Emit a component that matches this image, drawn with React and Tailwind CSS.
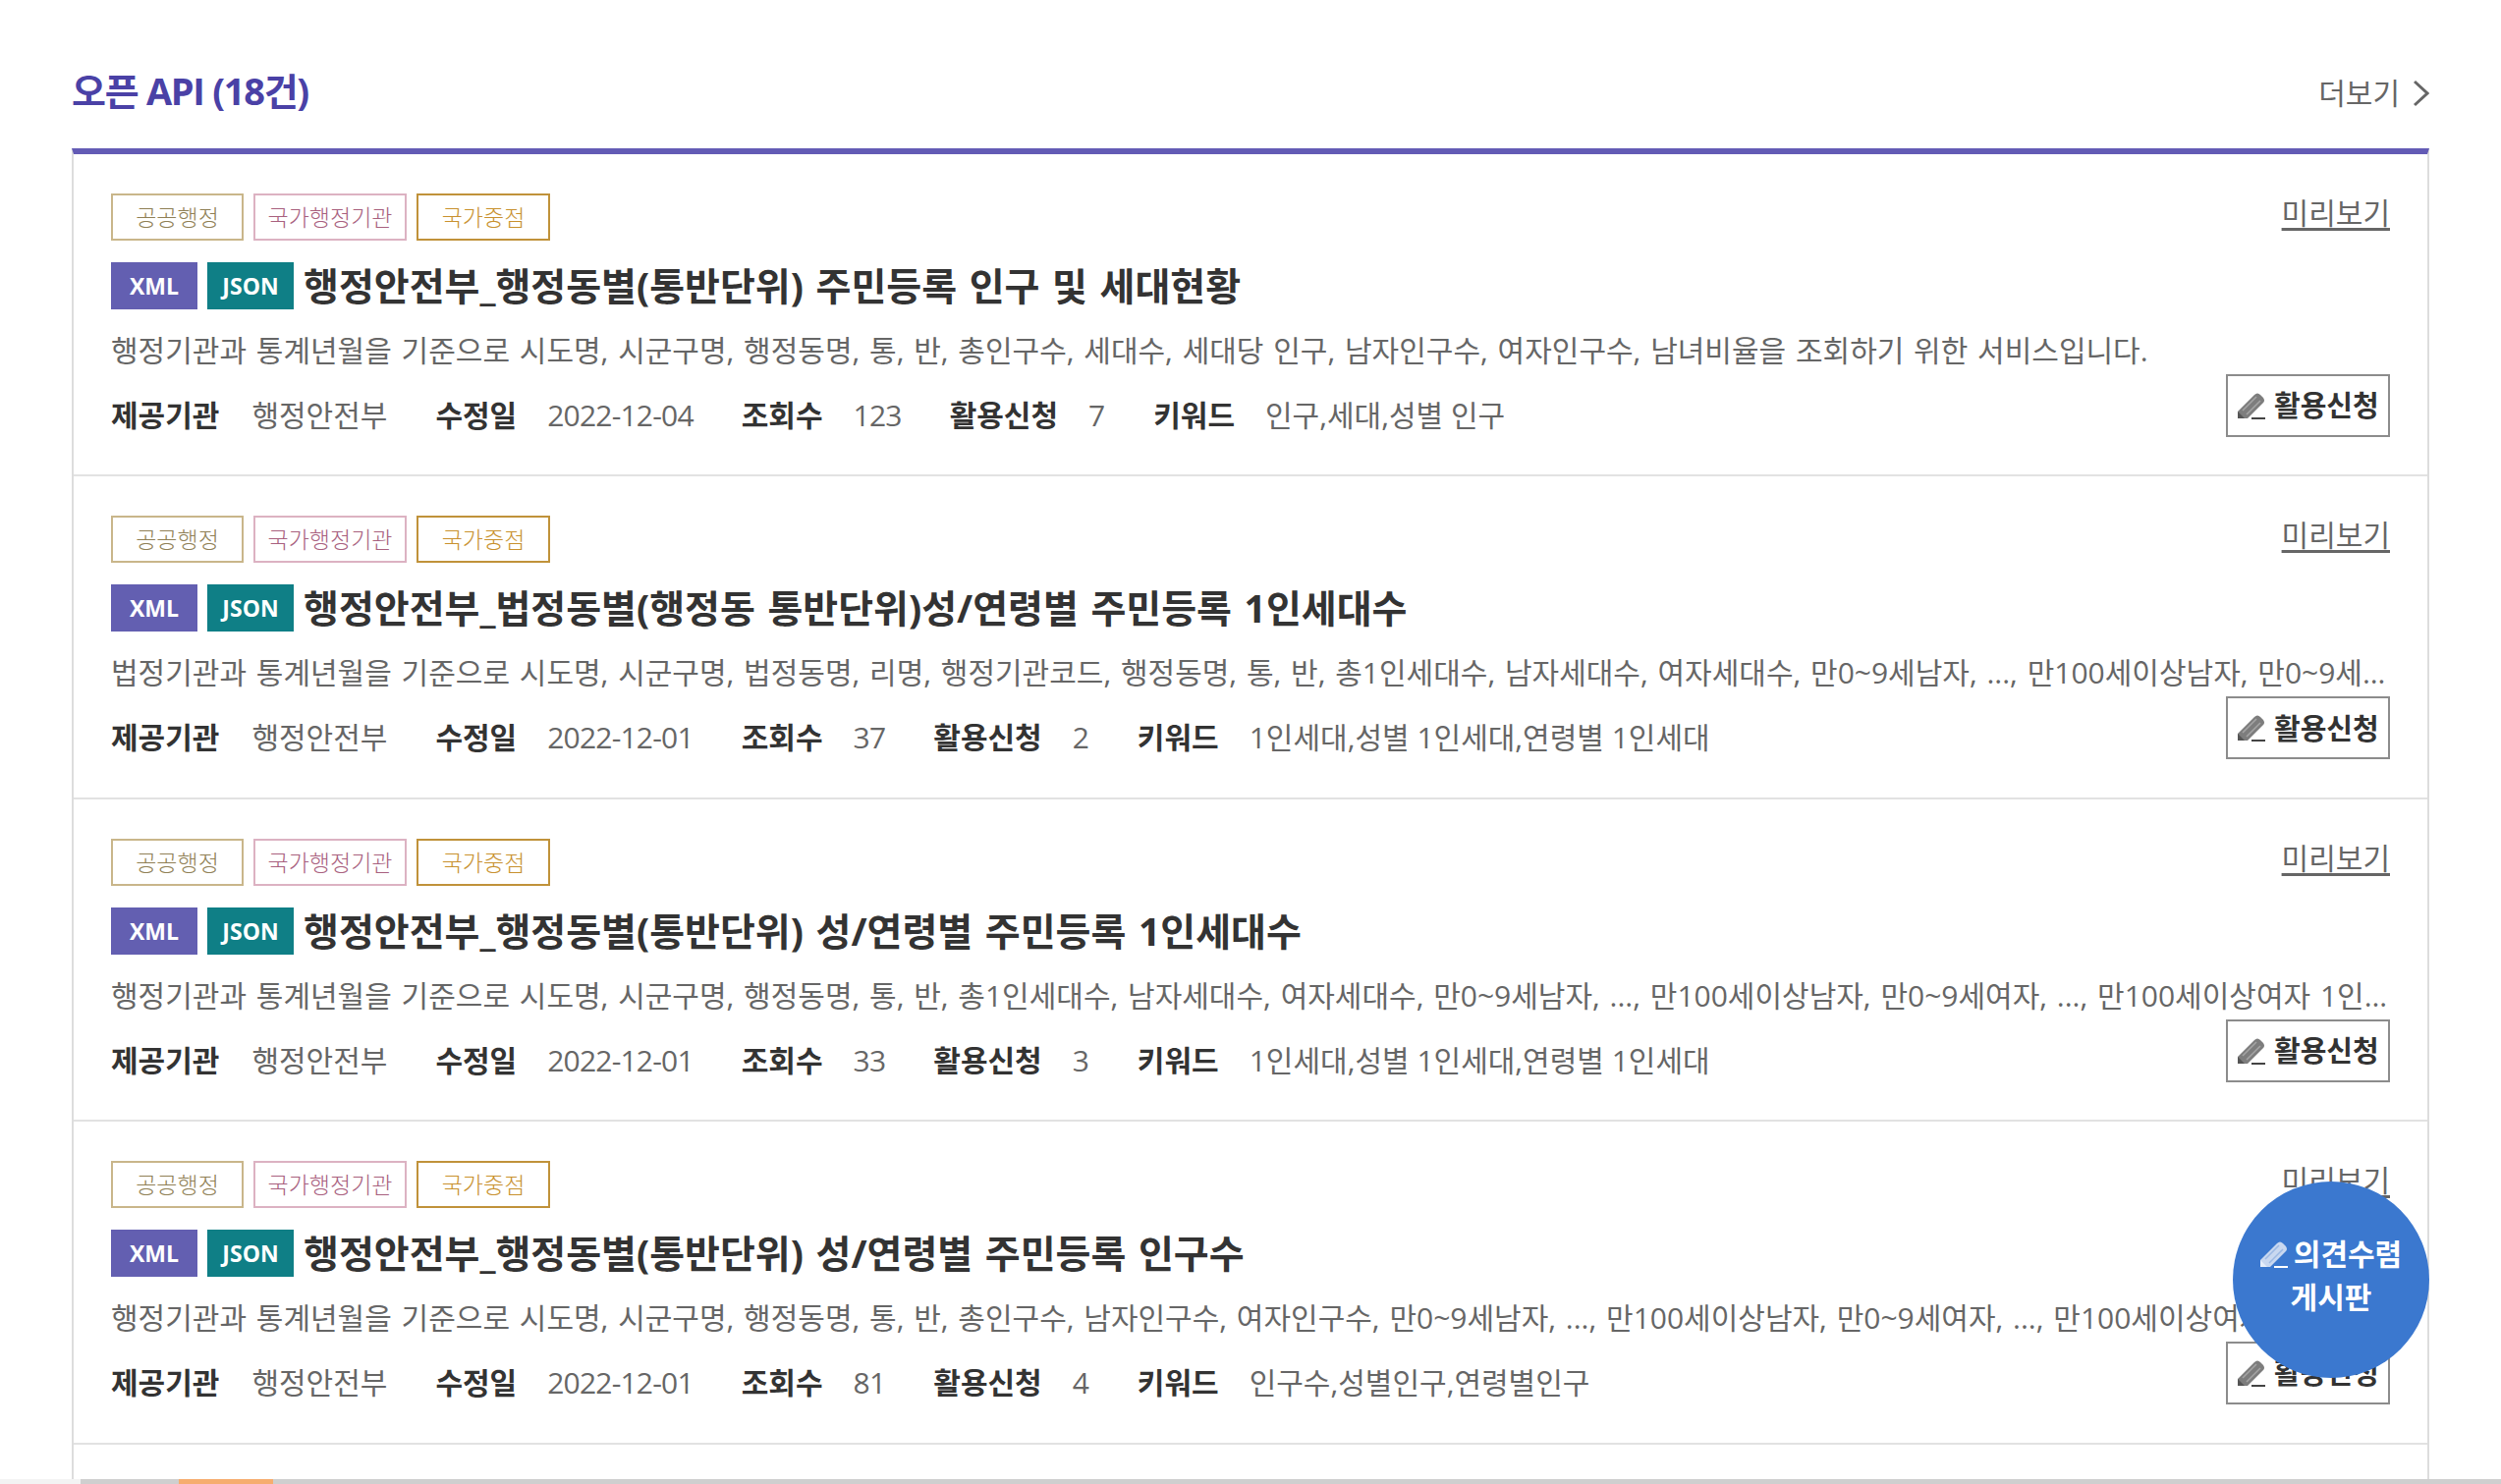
const rows = [
  {
    title: "행정안전부_행정동별(통반단위) 주민등록 인구 및 세대현황",
    desc: "행정기관과 통계년월을 기준으로 시도명, 시군구명, 행정동명, 통, 반, 총인구수, 세대수, 세대당 인구, 남자인구수, 여자인구수, 남녀비율을 조회하기 위한 서비스입니다.",
    date: "2022-12-04",
    views: "123",
    apply: "7",
    keywords: "인구,세대,성별 인구",
  },
  {
    title: "행정안전부_법정동별(행정동 통반단위)성/연령별 주민등록 1인세대수",
    desc: "법정기관과 통계년월을 기준으로 시도명, 시군구명, 법정동명, 리명, 행정기관코드, 행정동명, 통, 반, 총1인세대수, 남자세대수, 여자세대수, 만0~9세남자, ..., 만100세이상남자, 만0~9세여자, ..., 만100세이상여자 1인세대수를 조회하기 위한 서비스입니다.",
    date: "2022-12-01",
    views: "37",
    apply: "2",
    keywords: "1인세대,성별 1인세대,연령별 1인세대",
  },
  {
    title: "행정안전부_행정동별(통반단위) 성/연령별 주민등록 1인세대수",
    desc: "행정기관과 통계년월을 기준으로 시도명, 시군구명, 행정동명, 통, 반, 총1인세대수, 남자세대수, 여자세대수, 만0~9세남자, ..., 만100세이상남자, 만0~9세여자, ..., 만100세이상여자 1인세대수를 조회하기 위한 서비스입니다.",
    date: "2022-12-01",
    views: "33",
    apply: "3",
    keywords: "1인세대,성별 1인세대,연령별 1인세대",
  },
  {
    title: "행정안전부_행정동별(통반단위) 성/연령별 주민등록 인구수",
    desc: "행정기관과 통계년월을 기준으로 시도명, 시군구명, 행정동명, 통, 반, 총인구수, 남자인구수, 여자인구수, 만0~9세남자, ..., 만100세이상남자, 만0~9세여자, ..., 만100세이상여자 인구수를 조회하기 위한 서비스입니다.",
    date: "2022-12-01",
    views: "81",
    apply: "4",
    keywords: "인구수,성별인구,연령별인구",
  },
];

function PencilIcon({ body, line, stripe, tip }) {
  return (
    <svg width="28" height="28" viewBox="0 0 28 28" className="shrink-0">
      <path d="M0 27 L0 20 L17 3 Q20 0 23 3 L26 6 Q28 9 26 11 L10 27 Z" fill={body} />
      <path d="M0 27 L0 20 L7 27 Z" fill={tip} />
      <path d="M5 19 L19 5 M9 23 L23 9" stroke={stripe} strokeWidth="1.5" fill="none" />
      <path d="M14 26 H28 V28 H14 Z" fill={line} />
    </svg>
  );
}

function Meta({ label, value, numeric, wide }) {
  return (
    <div className={wide ? "flex items-center gap-[33px]" : "flex items-center gap-[31px]"}>
      <span className="font-bold text-[#333]">{label}</span>
      <span className={numeric ? "tracking-[-0.8px] text-[#666]" : "text-[#666]"}>{value}</span>
    </div>
  );
}

function ApiRow({ row }) {
  return (
    <li className="h-[328.4px] border-b-2 border-[#e2e2e2] px-[38px] pt-[40px]">
      <div className="flex items-start justify-between">
        <div className="flex gap-[10px] text-[23px] leading-[44px] font-light">
          <span className="h-[48px] w-[135px] border-2 border-[#c9b68a] text-center text-[#8f7f55]">공공행정</span>
          <span className="h-[48px] w-[156px] border-2 border-[#dcb2c2] text-center text-[#a8607e]">국가행정기관</span>
          <span className="h-[48px] w-[136px] border-2 border-[#c0923a] text-center text-[#c8912f]">국가중점</span>
        </div>
        <a className="text-[30px] leading-[40px] text-[#666] underline underline-offset-[4px]">미리보기</a>
      </div>
      <div className="mt-[22px] flex items-center">
        <span className="flex h-[48px] w-[88px] items-center justify-center bg-[#635fb1] text-[23px] font-bold text-white">XML</span>
        <span className="ml-[10px] flex h-[48px] w-[88px] items-center justify-center bg-[#0f7f86] text-[23px] font-bold text-white">JSON</span>
        <h3 className="ml-[10px] text-[39px] leading-[48px] font-bold text-[#333] [word-spacing:2.5px]">{row.title}</h3>
      </div>
      <p className="mt-[22px] truncate text-[30px] leading-[40px] text-[#666] [word-spacing:2px]">{row.desc}</p>
      <div className="mt-[4px] flex items-start justify-between">
        <div className="mt-[22px] flex gap-[49px] text-[30px] leading-[40px]">
          <Meta label="제공기관" value="행정안전부" wide />
          <Meta label="수정일" value={row.date} numeric />
          <Meta label="조회수" value={row.views} numeric />
          <Meta label="활용신청" value={row.apply} />
          <Meta label="키워드" value={row.keywords} />
        </div>
        <button className="flex h-[64px] w-[167px] items-center gap-[9px] border-2 border-[#8c8c8c] pl-[10px] text-[29px] font-bold text-[#333]">
          <PencilIcon body="#7d7d7d" line="#444444" stripe="#a5a5a5" tip="#555555" />
          활용신청
        </button>
      </div>
    </li>
  );
}

export default function App() {
  return (
    <div className="relative h-[1511px] w-[2546px] overflow-hidden bg-white font-['Open_Sans','Noto_Sans_CJK_KR',sans-serif]">
      <div className="mx-[73px] pt-[68px]">
        <div className="flex h-[83px] items-start justify-between">
          <h2 className="text-[38px] leading-[48px] font-bold tracking-[-1.3px] text-[#4a41a6]">오픈 API (18건)</h2>
          <a className="mt-[5px] flex items-center gap-[14px] text-[30px] leading-[44px] text-[#666]">
            더보기
            <svg width="16" height="28" viewBox="0 0 16 28" fill="none" stroke="#666" strokeWidth="3">
              <path d="M1 2 L14 14 L1 26" />
            </svg>
          </a>
        </div>
        <ul className="h-[1400px] border-x-2 border-t-[6px] border-x-[#dddddd] border-t-[#635bb5]">
          {rows.map((row) => (
            <ApiRow key={row.title} row={row} />
          ))}
        </ul>
      </div>

      <button className="absolute top-[1203px] left-[2273px] flex h-[200px] w-[200px] flex-col items-center justify-center rounded-full bg-[#3b78cf] pb-[9px] text-[30px] leading-[44px] font-bold text-white">
        <span className="flex items-center gap-[6px]">
          <PencilIcon body="#c9d8f0" line="#ffffff" stripe="#9db9e4" tip="#e6eefa" />
          의견수렴
        </span>
        <span>게시판</span>
      </button>

      <div className="absolute right-0 bottom-0 left-0 flex h-[5px] bg-[#cfcfcf]">
        <div className="w-[82px] bg-[#f3f3f3]" />
        <div className="ml-[100px] w-[96px] bg-[#f6ad6f]" />
      </div>
    </div>
  );
}
